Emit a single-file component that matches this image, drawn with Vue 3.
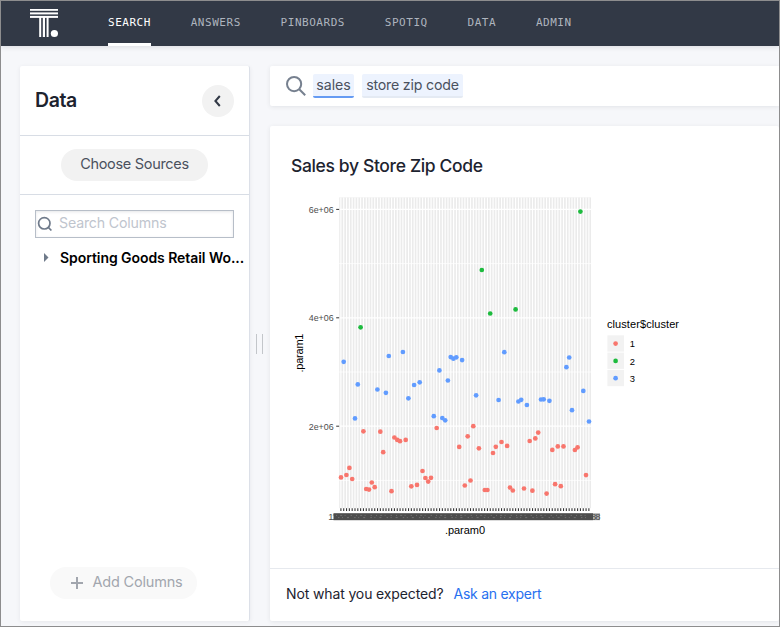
<script setup>
const nav = [
  { label: 'SEARCH', active: true },
  { label: 'ANSWERS' },
  { label: 'PINBOARDS' },
  { label: 'SPOTIQ' },
  { label: 'DATA' },
  { label: 'ADMIN' },
]

const step = 2.818
const columns = Array.from({ length: 89 }, (_, i) => +(50.9 + i * step).toFixed(2))

// [x, y] pairs in chart space, one list per cluster
const clusters = [
  {
    id: 1,
    color: '#f8766d',
    points: [
      [51, 287.4], [56.4, 285], [59.4, 277.9], [62.2, 289], [73.4, 241.3], [76.2, 299], [79, 299.6],
      [81.8, 292.5], [84.7, 297.2], [90.3, 241.7], [93.2, 262.2], [101.5, 301.2], [104.4, 247.5],
      [107.3, 249.9], [110, 251.2], [115.7, 249.9], [121.3, 296.3], [127, 294.9], [132.5, 281],
      [135.4, 288], [138.2, 291.6], [141, 287.8], [146.7, 238], [169.2, 256.9], [174.8, 295.5],
      [177.7, 246.3], [180.5, 290.5], [183.3, 236.2], [188.9, 258.3], [194.8, 300], [197.4, 300],
      [203, 263], [205.8, 256.8], [211.5, 252], [217.1, 255.9], [220, 297.5], [222.8, 300.5],
      [234, 298.5], [239.7, 251], [242.4, 300.7], [245.3, 248.4], [248.2, 242.6], [256.6, 303.6],
      [262.3, 259.9], [265.1, 294.2], [267.8, 256.4], [270.8, 296.2], [273.5, 256.4],
      [284.9, 260], [287.6, 257.3], [296, 285.1],
    ],
  },
  {
    id: 2,
    color: '#1dbb3e',
    points: [[70.6, 137.3], [191.8, 80], [200.2, 123.5], [225.6, 119.4], [290.4, 21.6]],
  },
  {
    id: 3,
    color: '#619cff',
    points: [
      [53.7, 171.8], [65, 228.4], [67.8, 194.4], [87.4, 199.5], [95.9, 202.8], [98.8, 166],
      [112.9, 162], [118.4, 208.3], [124.1, 195], [129.7, 192.3], [143.8, 226.2], [149.4, 180.4],
      [152.3, 228], [155.2, 230.3], [157.9, 190.5], [160.7, 167.1], [163.4, 168.7], [166.3, 167.3],
      [172.1, 170.1], [186.1, 205.3], [208.6, 210], [214.3, 162.2], [228.4, 211.5], [231.2, 209.8],
      [236.9, 215], [251, 209.5], [253.7, 209.3], [259.4, 210.8], [276.4, 177.2], [279.2, 167.5],
      [282, 220.2], [293.3, 200.9], [299, 231.5],
    ],
  },
]

const yAxis = [
  { label: '6e+06', y: 19.4 },
  { label: '4e+06', y: 127.8 },
  { label: '2e+06', y: 236.2 },
]
const minor = [73.6, 182, 290.4]
</script>

<template>
  <div class="window">
    <header class="topbar">
      <svg class="logo" width="29" height="29" viewBox="0 0 29 29">
        <g fill="#fff">
          <rect x="0" y="0" width="28" height="1.8" />
          <rect x="0" y="3.4" width="28" height="2" />
          <rect x="0" y="6.9" width="28" height="2" />
          <rect x="9.2" y="8" width="2" height="20" />
          <rect x="12.8" y="8" width="2.2" height="20" />
          <rect x="16.6" y="8" width="2" height="20" />
          <circle cx="24.4" cy="24.5" r="3.6" />
        </g>
      </svg>
      <nav class="nav">
        <a v-for="item in nav" :key="item.label" class="nav-item" :class="{ active: item.active }">{{ item.label }}</a>
      </nav>
    </header>

    <div class="body">
      <aside class="sidebar">
        <div class="side-head">
          <h2 class="side-title">Data</h2>
          <button class="collapse">
            <svg width="8" height="12" viewBox="0 0 8 12"><path d="M5.8 1 1.4 6l4.4 5" fill="none" stroke="#323946" stroke-width="2" /></svg>
          </button>
        </div>
        <div class="sources"><button class="pill">Choose Sources</button></div>
        <div class="columns">
          <div class="col-search">
            <svg width="16" height="16" viewBox="0 0 16 16" fill="none" stroke="#6f7a8a" stroke-width="1.7">
              <circle cx="7.3" cy="7.3" r="5.7" /><path d="m10.8 10.8 3.6 3.7" />
            </svg>
            <span>Search Columns</span>
          </div>
          <div class="tree-row">
            <svg width="5" height="9" viewBox="0 0 5 9"><path d="M0 0 4.5 4.5 0 9z" fill="#6f7a8a" /></svg>
            <span>Sporting Goods Retail Wo...</span>
          </div>
        </div>
        <button class="pill add">
          <svg width="12" height="12" viewBox="0 0 12 12"><path d="M6 0v12M0 6h12" stroke="#a2a6ae" stroke-width="2" /></svg>
          <span>Add Columns</span>
        </button>
      </aside>

      <div class="splitter"><i></i><i></i></div>

      <main class="main">
        <div class="searchbar">
          <svg width="20" height="20" viewBox="0 0 20 20" fill="none" stroke="#76808f" stroke-width="2">
            <circle cx="8.1" cy="8.1" r="7.1" /><path d="m13 13 6.2 6.3" />
          </svg>
          <span class="token current">sales</span>
          <span class="token zip">store zip code</span>
        </div>

        <section class="answer">
          <h1 class="title">Sales by Store Zip Code</h1>
          <svg class="chart" width="420" height="360" viewBox="0 0 420 360">
            <rect x="49.2" y="7.4" width="251.8" height="310.8" fill="#ebebeb" />
            <g stroke="#fff">
              <path v-for="y in minor" :key="y" :d="`M49.2 ${y}H301`" stroke-width=".7" />
              <path v-for="t in yAxis" :key="t.y" :d="`M49.2 ${t.y}H301`" stroke-width="1.2" />
              <path v-for="x in columns" :key="x" :d="`M${x} 7.4V318.2`" stroke-width="1.15" />
            </g>
            <g v-for="c in clusters" :key="c.id" :fill="c.color">
              <circle v-for="(p, i) in c.points" :key="i" :cx="p[0]" :cy="p[1]" r="2.35" />
            </g>
            <g stroke="#333">
              <path v-for="t in yAxis" :key="t.y" :d="`M46.2 ${t.y}H49.2`" stroke-width="1" />
              <path v-for="x in columns" :key="x" :d="`M${x} 318.2v2.8`" stroke-width="1.1" />
            </g>
            <g class="tick">
              <text v-for="t in yAxis" :key="t.y" x="18.7" :y="t.y + 3.4" textLength="25" lengthAdjust="spacingAndGlyphs">{{ t.label }}</text>
              <text x="38.3" y="330" textLength="22">11010</text>
              <text x="288.5" y="330" textLength="22">98188</text>
            </g>
            <rect x="43.5" y="323.2" width="259.5" height="7" fill="#4d4d4d" />
            <g fill="none" stroke="#7c7c7c" stroke-width=".8">
              <path d="M46 325.4H300" stroke-dasharray="1 3.2 2 2.4 1 5 1.4 4" />
              <path d="M48 327.6H299" stroke-dasharray="1.4 2.6 1 4 2 5.2" />
            </g>
            <rect x="303" y="323.2" width="7" height="7" fill="#4d4d4d" fill-opacity=".45" />
            <g class="axis">
              <text x="155" y="344" textLength="40">.param0</text>
              <text transform="translate(13 182.5) rotate(-90)" textLength="39">.param1</text>
              <text x="317" y="138" textLength="72">cluster$cluster</text>
            </g>
            <g v-for="(c, i) in clusters" :key="c.id">
              <rect x="317.4" :y="145.3 + i * 17.3" width="16.6" height="16.3" fill="#f2f2f2" />
              <circle cx="325.6" :cy="153.6 + i * 17.3" r="2.35" :fill="c.color" />
              <text class="legend" x="339.7" :y="157.2 + i * 17.3">{{ c.id }}</text>
            </g>
          </svg>
          <footer class="foot">
            <span class="ask">Not what you expected?</span>
            <a class="expert">Ask an expert</a>
          </footer>
        </section>
      </main>
    </div>
  </div>
</template>

<style>
body {
  margin: 0;
}
</style>

<style scoped>
* {
  box-sizing: border-box;
}
.window {
  width: 780px;
  height: 627px;
  border: 1px solid #8d8d8e;
  background: #f6f7fa;
  font-family: Inter, "Liberation Sans", sans-serif;
  display: flex;
  flex-direction: column;
  overflow: hidden;
  white-space: nowrap;
}
button {
  border: 0;
  padding: 0;
  font: inherit;
}
h1,
h2 {
  margin: 0;
  font-weight: 500;
}
svg {
  display: block;
  flex: none;
}
.topbar {
  height: 45px;
  flex: none;
  background: #323946;
  display: flex;
  padding-left: 29px;
  box-shadow: 0 1px 5px rgba(50, 57, 70, 0.14);
}
.logo {
  margin-top: 8px;
}
.nav {
  display: flex;
  gap: 39.8px;
  margin-left: 49px;
  font: 11px "DejaVu Sans Mono", monospace;
  letter-spacing: 0.53px;
}
.nav-item {
  height: 45px;
  line-height: 43px;
  color: #aeb4be;
}
.nav-item.active {
  color: #fff;
  border-bottom: 3px solid #fff;
}
.body {
  flex: 1;
  display: flex;
  padding: 20px 0 5px 19px;
  min-height: 0;
}
.sidebar {
  width: 230px;
  flex: none;
  background: #fff;
  border-right: 1px solid #dce0e8;
  border-radius: 2px;
  box-shadow: 0 1px 4px rgba(50, 57, 70, 0.08);
  display: flex;
  flex-direction: column;
}
.side-head {
  height: 70px;
  border-bottom: 1px solid #d8dde5;
  display: flex;
  align-items: center;
  justify-content: space-between;
  padding: 0 15px;
}
.side-title {
  font-size: 19.5px;
  font-weight: 600;
  letter-spacing: -0.4px;
  color: #1d232f;
  padding-bottom: 2px;
}
.collapse {
  width: 32px;
  height: 32px;
  border-radius: 50%;
  background: #f2f2f2;
  display: flex;
  align-items: center;
  justify-content: center;
}
.sources {
  height: 59px;
  border-bottom: 1px solid #d8dde5;
  display: flex;
  justify-content: center;
  align-items: center;
}
.pill {
  width: 147px;
  height: 32px;
  border-radius: 16px;
  background: #f2f2f2;
  color: #4a515e;
  font-size: 14.5px;
  line-height: 28px;
  letter-spacing: -0.3px;
  padding-bottom: 2px;
}
.columns {
  flex: 1;
  padding: 15px 0 0 15px;
}
.col-search {
  width: 199px;
  height: 28px;
  border: 1px solid #b7bec8;
  box-shadow: inset 0 1px 3px rgba(50, 57, 70, 0.12);
  display: flex;
  align-items: center;
  padding-left: 1px;
  gap: 6px;
  font-size: 14.2px;
  line-height: 24px;
  letter-spacing: -0.18px;
  color: #bfc5ce;
}
.col-search span {
  padding-bottom: 2px;
}
.tree-row {
  display: flex;
  align-items: center;
  gap: 11px;
  padding-left: 9px;
  height: 39px;
  font-size: 14px;
  font-weight: 600;
  letter-spacing: -0.06px;
  color: #000;
}
.tree-row span {
  padding-bottom: 1px;
}
.add {
  margin: 0 0 22px 30px;
  padding: 0 0 0 6px;
  background: #f9f9f9;
  color: #a2a6ae;
  letter-spacing: -0.2px;
  display: flex;
  align-items: center;
  justify-content: center;
  gap: 10px;
}
.add span {
  padding-bottom: 2px;
}
.splitter {
  width: 20px;
  flex: none;
  align-self: flex-start;
  margin-top: 268px;
  height: 20px;
  display: flex;
  gap: 5px;
  padding-left: 6px;
}
.splitter i {
  width: 1px;
  background: #c3c6ca;
}
.main {
  flex: 1;
  min-width: 0;
  display: flex;
  flex-direction: column;
  gap: 20px;
}
.searchbar {
  height: 40px;
  flex: none;
  background: #fff;
  border-radius: 2px 0 0 2px;
  box-shadow: 0 1px 4px rgba(50, 57, 70, 0.1);
  display: flex;
  align-items: center;
  padding-left: 16px;
  gap: 8px;
}
.token {
  width: 41px;
  height: 24px;
  background: #edf3fe;
  border-bottom: 2px solid #e4eaf3;
  border-radius: 2px;
  font-size: 14.2px;
  line-height: 22px;
  text-align: center;
  color: #4a515e;
}
.current {
  margin-left: -1px;
  border-color: #659bf3;
}
.zip {
  width: 101px;
  letter-spacing: -0.2px;
}
.answer {
  flex: 1;
  background: #fff;
  border-radius: 2px;
  box-shadow: 0 1px 4px rgba(50, 57, 70, 0.1);
  display: flex;
  flex-direction: column;
}
.title {
  height: 64px;
  padding: 27px 0 0 21px;
  font-size: 17.5px;
  line-height: 26px;
  letter-spacing: -0.36px;
  color: #1d232f;
}
.chart {
  margin-left: 20px;
  font-family: "Liberation Sans", Arial, sans-serif;
}
.tick {
  font-size: 9.4px;
  fill: #4d4d4d;
}
.axis {
  font-size: 11px;
  fill: #000;
}
.legend {
  font-size: 9.4px;
  fill: #000;
}
.foot {
  margin-top: auto;
  height: 53px;
  flex: none;
  border-top: 1px solid #e6e9ee;
  display: flex;
  align-items: center;
  padding: 0 0 3px 16px;
  gap: 10px;
  font-size: 14px;
  letter-spacing: -0.13px;
  color: #1d232f;
}
.expert {
  color: #2770ef;
  letter-spacing: -0.25px;
}
</style>
